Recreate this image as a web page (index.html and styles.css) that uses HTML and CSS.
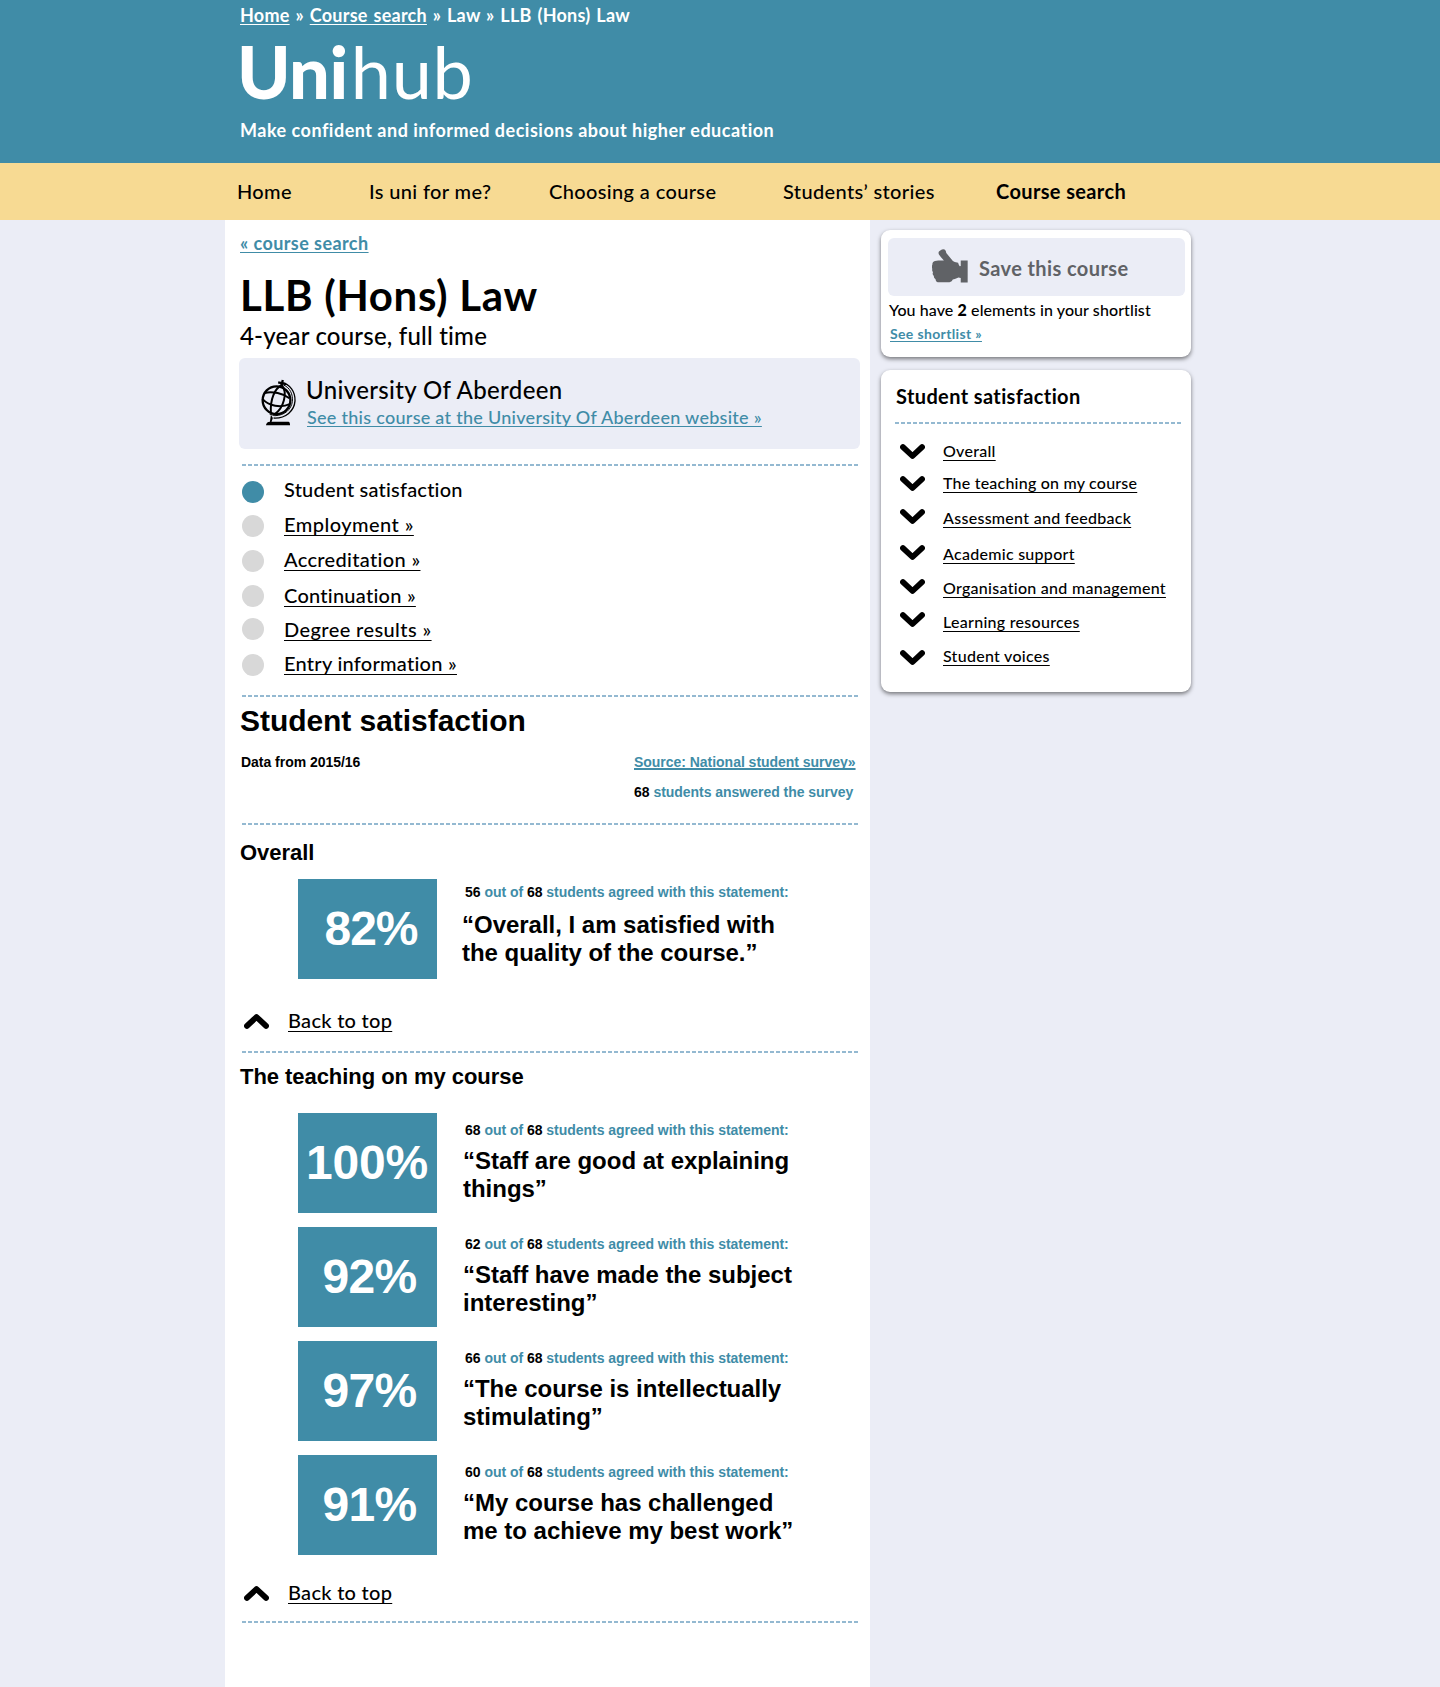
FILE: index.html
```
<!DOCTYPE html>
<html lang="en">
<head>
<meta charset="utf-8">
<title>LLB (Hons) Law - Unihub</title>
<link rel="stylesheet" href="styles.css">
</head>
<body>
<svg class="defs" width="0" height="0" aria-hidden="true">
  <symbol id="chevron" viewBox="0 0 25 16"><path d="M3 3.1 12.5 12 22 3.1" fill="none" stroke="currentColor" stroke-width="5.8" stroke-linecap="round" stroke-linejoin="round"/></symbol>
</svg>

<header class="header">
  <p class="breadcrumb"><a href="#">Home</a> » <a href="#">Course search</a> » Law » LLB (Hons) Law</p>
  <div class="logo"><span class="logo-uni">Uni</span><span class="logo-hub">hub</span></div>
  <p class="tagline">Make confident and informed decisions about higher education</p>
</header>

<nav class="nav">
  <a href="#">Home</a>
  <a href="#">Is uni for me?</a>
  <a href="#">Choosing a course</a>
  <a href="#">Students’ stories</a>
  <a href="#" class="nav-current">Course search</a>
</nav>

<div class="layout">
  <main class="main">
    <a href="#" class="back-link">« course search</a>
    <h1 class="title">LLB (Hons) Law</h1>
    <p class="subtitle">4-year course, full time</p>

    <div class="university">
      <svg class="globe" viewBox="0 0 106 142" fill="none" stroke="#000">
        <circle cx="47" cy="64" r="42" stroke-width="7"/>
        <g stroke-width="6">
          <path d="M63 18C42 28 27 62 30 103"/>
          <path d="M63 18C82 42 68 88 42 106"/>
          <path d="M12 42C34 36 68 44 86 58"/>
          <path d="M4 60C24 82 60 88 87 76"/>
        </g>
        <path d="M62 11C88 15 104 38 103 66 101 96 75 120 38 118" stroke-width="4"/>
        <path d="M68 18C88 26 97 46 95 68 92 92 72 110 42 111L26 106" stroke-width="3"/>
        <path d="M66 3 62 20M52 10 76 15" stroke-width="7"/>
        <path d="M30 108 36 118 32 129H83Q88 130 88 140H15Q16 130 27 129Z" fill="#000" stroke="none"/>
      </svg>
      <div>
        <p class="university-name">University Of Aberdeen</p>
        <a href="#" class="university-link">See this course at the University Of Aberdeen website »</a>
      </div>
    </div>

    <div class="rule rule-sections"></div>
    <ul class="sections">
      <li><i class="dot dot-on"></i><span>Student satisfaction</span></li>
      <li><i class="dot"></i><a href="#">Employment »</a></li>
      <li><i class="dot"></i><a href="#">Accreditation »</a></li>
      <li><i class="dot"></i><a href="#">Continuation »</a></li>
      <li><i class="dot"></i><a href="#">Degree results »</a></li>
      <li><i class="dot"></i><a href="#">Entry information »</a></li>
    </ul>
    <div class="rule"></div>

    <h2 class="section-title">Student satisfaction</h2>
    <div class="meta">
      <p>Data from 2015/16</p>
      <div class="meta-source">
        <a href="#">Source: National student survey»</a>
        <p><b>68</b> students answered the survey</p>
      </div>
    </div>
    <div class="rule rule-meta"></div>

    <section class="group group-overall">
      <h3>Overall</h3>
      <div class="stat">
        <div class="tile">82%</div>
        <div class="stat-text">
          <p class="caption"><b>56</b> out of <b>68</b> students agreed with this statement:</p>
          <p class="quote">“Overall, I am satisfied with<br>the quality of the course.”</p>
        </div>
      </div>
      <div class="to-top"><svg class="chevron chevron-up"><use href="#chevron"/></svg><a href="#">Back to top</a></div>
    </section>
    <div class="rule rule-group"></div>

    <section class="group group-teaching">
      <h3>The teaching on my course</h3>
      <div class="stat">
        <div class="tile tile-full">100%</div>
        <div class="stat-text">
          <p class="caption"><b>68</b> out of <b>68</b> students agreed with this statement:</p>
          <p class="quote">“Staff are good at explaining<br>things”</p>
        </div>
      </div>
      <div class="stat">
        <div class="tile">92%</div>
        <div class="stat-text">
          <p class="caption"><b>62</b> out of <b>68</b> students agreed with this statement:</p>
          <p class="quote">“Staff have made the subject<br>interesting”</p>
        </div>
      </div>
      <div class="stat">
        <div class="tile">97%</div>
        <div class="stat-text">
          <p class="caption"><b>66</b> out of <b>68</b> students agreed with this statement:</p>
          <p class="quote">“The course is intellectually<br>stimulating”</p>
        </div>
      </div>
      <div class="stat">
        <div class="tile">91%</div>
        <div class="stat-text">
          <p class="caption"><b>60</b> out of <b>68</b> students agreed with this statement:</p>
          <p class="quote">“My course has challenged<br>me to achieve my best work”</p>
        </div>
      </div>
      <div class="to-top"><svg class="chevron chevron-up"><use href="#chevron"/></svg><a href="#">Back to top</a></div>
    </section>
    <div class="rule rule-last"></div>
  </main>

  <aside class="sidebar">
    <div class="card card-save">
      <button class="save" type="button">
        <svg class="thumb" viewBox="35 26 109 102" fill="#606266"><path d="M56 42Q52 33 60 30L65 27Q75 24 77 32 77 38 82 42L92 54Q97 62 104 65L114 67Q116 74 119 78L122 77V60H143V127H122V113L115 112Q110 115 104 116L98 118Q96 125 88 126H52Q45 124 46 117 39 114 41 107 35 103 38 96 34 91 36 86 33 79 36 73 36 64 44 62L54 60 71 60Q62 51 56 42Z"/></svg>
        <span>Save this course</span>
      </button>
      <p class="shortlist">You have <b>2</b> elements in your shortlist</p>
      <a href="#" class="shortlist-link">See shortlist »</a>
    </div>

    <div class="card card-index">
      <h4>Student satisfaction</h4>
      <div class="rule rule-card"></div>
      <ul class="index">
        <li><svg class="chevron"><use href="#chevron"/></svg><a href="#">Overall</a></li>
        <li><svg class="chevron"><use href="#chevron"/></svg><a href="#">The teaching on my course</a></li>
        <li><svg class="chevron"><use href="#chevron"/></svg><a href="#">Assessment and feedback</a></li>
        <li><svg class="chevron"><use href="#chevron"/></svg><a href="#">Academic support</a></li>
        <li><svg class="chevron"><use href="#chevron"/></svg><a href="#">Organisation and management</a></li>
        <li><svg class="chevron"><use href="#chevron"/></svg><a href="#">Learning resources</a></li>
        <li><svg class="chevron"><use href="#chevron"/></svg><a href="#">Student voices</a></li>
      </ul>
    </div>
  </aside>
</div>
</body>
</html>
```
FILE: styles.css
```
* { box-sizing: border-box; }
html, body { margin: 0; }
body {
  min-height: 1687px;
  background: #ebedf6;
  color: #000;
  font: 500 20px/24px Lato, "Liberation Sans", sans-serif;
  white-space: nowrap;
}
p, h1, h2, h3, h4, ul { margin: 0; padding: 0; }
ul { list-style: none; }
a {
  color: inherit;
  text-decoration: underline;
  text-decoration-thickness: 1px;
  text-decoration-skip-ink: none;
  text-underline-offset: 3px;
}
.defs { display: block; position: absolute; }

/* Header */
.header {
  height: 163px;
  padding: 3px 0 0 240px;
  background: #408ca7;
  color: #fff;
}
.breadcrumb, .tagline { font-size: 18px; font-weight: 700; letter-spacing: .5px; }
.breadcrumb { letter-spacing: .25px; word-spacing: 1.2px; }
.breadcrumb a { text-underline-offset: 2px; }
.logo { display: flex; margin: 8px 0 11px -3px; font-size: 72px; line-height: 72px; }
.logo-uni { font-weight: 900; letter-spacing: -.4px; }
.logo-hub { margin-left: 3px; font-weight: 400; letter-spacing: .7px; }

.nav {
  display: grid;
  grid-template-columns: 132px 180px 234px 213px auto;
  height: 57px;
  padding-left: 237px;
  background: #f7da93;
  line-height: 57px;
  letter-spacing: .37px;
}
.nav a { text-decoration: none; }
.nav .nav-current { font-weight: 700; }

/* Page columns */
.layout {
  display: grid;
  grid-template-columns: 645px 310px;
  column-gap: 11px;
  margin-left: 225px;
}
.main { min-height: 1467px; padding: 11px 10px 0 14px; background: #fff; }

.rule {
  height: 2px;
  margin: 20px 2px 0 3px;
  background: repeating-linear-gradient(90deg, #94b9d1 0 4px, transparent 4px 6px);
}

.back-link {
  display: block;
  width: max-content;
  margin-left: 1px;
  color: #408ca7;
  font-size: 18px;
  font-weight: 700;
  letter-spacing: .43px;
  text-underline-offset: 2px;
}
.title { margin: 16px 0 0 1px; font-size: 42px; line-height: 48px; font-weight: 700; letter-spacing: .67px; }
.subtitle { margin: 3px 0 0 1px; font-size: 24px; line-height: 28px; letter-spacing: .2px; }

.university {
  display: flex;
  height: 91px;
  margin-top: 8px;
  padding: 18px 0 0 22px;
  border-radius: 6px;
  background: #ebedf6;
}
.globe { width: 35px; height: 47px; margin: 3px 10px 0 0; }
.university-name { font-size: 24px; line-height: 28px; letter-spacing: .36px; }
.university-link {
  display: block;
  margin: 1px 0 0 1px;
  color: #408ca7;
  font-size: 18px;
  letter-spacing: .28px;
  text-underline-offset: 2px;
}

/* Course sections */
.rule-sections { margin-top: 15px; }
.sections { padding: 11px 0 0 3px; }
.sections li { display: flex; gap: 20px; height: 35px; letter-spacing: .4px; }
.sections li:first-child { letter-spacing: .2px; }
.sections li:nth-child(2) { letter-spacing: .45px; }
.sections li:nth-child(3) { height: 36px; letter-spacing: .33px; }
.sections li:nth-child(4) { height: 34px; letter-spacing: .25px; }
.sections li:nth-child(5) { height: 34px; }
.sections li:last-child { height: 24px; letter-spacing: .26px; }
.dot { flex: none; width: 22px; height: 22px; margin-top: 3px; border-radius: 50%; background: #d8d8d8; }
.dot-on { margin-top: 4px; background: #408ca7; }
.sections li:nth-child(4) .dot { margin-top: 2px; }
.sections li:nth-child(5) .dot { margin-top: 1px; }

/* Survey results */
.section-title, .meta, h3, .tile, .stat-text { font-family: "Liberation Sans", Arial, sans-serif; font-weight: 700; }
.section-title { margin: 6px 0 0 1px; font-size: 30px; line-height: 36px; letter-spacing: -.05px; }
.meta {
  display: grid;
  grid-template-columns: 393px auto;
  margin: 13px 0 0 2px;
  font-size: 14px;
  line-height: 20px;
  letter-spacing: -.03px;
}
.meta-source { display: grid; row-gap: 10px; color: #408ca7; }
.meta-source a { width: max-content; text-decoration-thickness: 2px; text-underline-offset: 1px; }
b { color: #000; }
.rule-meta { margin-top: 21px; }

h3 { margin-left: 1px; font-size: 22px; line-height: 28px; letter-spacing: -.05px; }
.group-overall { padding-top: 14px; }
.group-teaching { padding-top: 10px; }
.stat { display: flex; height: 100px; margin: 14px 0 0 59px; }
.group-overall .stat { margin-top: 12px; }
.group-teaching h3 + .stat { margin-top: 22px; }
.tile {
  width: 139px;
  height: 100px;
  background: #408ca7;
  color: #fff;
  font-size: 48px;
  line-height: 99px;
  letter-spacing: -.7px;
  text-align: center;
  text-indent: 4px;
}
.tile-full { letter-spacing: -.2px; text-indent: -1px; }
.group-overall .tile { letter-spacing: -1px; text-indent: 7px; }
.stat-text { padding: 7px 0 0 26px; }
.caption { margin-left: 2px; color: #408ca7; font-size: 14px; line-height: 20px; letter-spacing: -.03px; }
.quote { margin-top: 7px; font-size: 24px; line-height: 28px; letter-spacing: -.02px; }
.group-overall .stat-text { padding: 3px 0 0 25px; }
.group-overall .caption { margin-left: 3px; }
.group-overall .quote { margin-top: 9px; }

.chevron { flex: none; width: 25px; height: 16px; }
.chevron-up { margin-top: 5px; transform: rotate(180deg); }
.to-top { display: flex; gap: 19px; margin: 29px 0 0 5px; letter-spacing: .28px; }
.group-teaching .to-top { margin-top: 25px; }
.rule-group { margin-top: 19px; }
.rule-last { margin-top: 17px; }

/* Sidebar */
.sidebar { padding-top: 10px; }
.card { border-radius: 9px; background: #fff; box-shadow: 0 2px 4px rgba(0, 0, 0, .5); }
.card-save { height: 127px; padding: 8px 6px 0 7px; }
.save {
  display: flex;
  align-items: center;
  width: 100%;
  height: 58px;
  padding: 2px 0 0 44px;
  border: 0;
  border-radius: 6px;
  background: #ebedf6;
  color: #606266;
  font: 700 20px/24px Lato, "Liberation Sans", sans-serif;
  letter-spacing: .4px;
}
.thumb { width: 36px; height: 34px; margin: 0 11px 4px 0; }
.shortlist { margin: 4px 0 5px 1px; font-size: 16px; line-height: 20px; letter-spacing: .09px; }
.shortlist b { font-weight: 900; }
.shortlist-link {
  display: block;
  width: max-content;
  margin-left: 2px;
  color: #408ca7;
  font-size: 14px;
  line-height: 18px;
  font-weight: 700;
  letter-spacing: .35px;
  text-underline-offset: 2px;
}
.card-index { height: 322px; margin-top: 13px; padding: 14px 10px 0 14px; }
.card-index h4 { margin-left: 1px; font-size: 20px; line-height: 24px; font-weight: 700; letter-spacing: .38px; }
.rule-card { margin: 14px 0 0; }
.index { padding: 17px 0 0 5px; font-size: 16px; line-height: 20px; letter-spacing: .28px; }
.index li { display: flex; gap: 18px; height: 34px; }
.index li:nth-child(1) { height: 32px; }
.index li:nth-child(2) { height: 35px; letter-spacing: .22px; }
.index li:nth-child(3) { height: 36px; }
.index li:nth-child(1) .chevron { margin-top: 3px; }
.index li:nth-child(2) .chevron { margin-top: 3px; }
.index li:nth-child(3) .chevron,
.index li:nth-child(4) .chevron { margin-top: 1px; }
.index li:nth-child(5) .chevron { margin-top: 1px; }
.index li:nth-child(7) .chevron { margin-top: 4px; }
```
